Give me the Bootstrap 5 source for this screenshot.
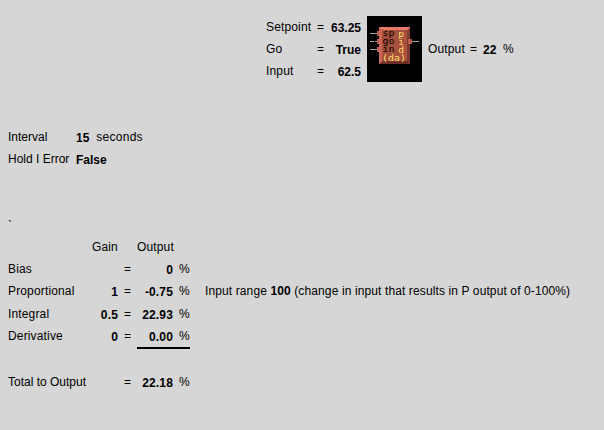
<!DOCTYPE html>
<html lang="en">
<head>
<meta charset="utf-8">
<meta name="viewport" content="width=device-width, initial-scale=1">
<title>PID controller</title>
<link href="https://cdn.jsdelivr.net/npm/bootstrap@5.3.0/dist/css/bootstrap.min.css" rel="stylesheet">
<style>
body{background:#d6d6d6;color:#000;font:12px/22px "Liberation Sans",Arial,sans-serif;width:604px;height:430px;overflow:hidden;letter-spacing:.15px}
b,strong{font-weight:700}
.pid-top{padding:16px 0 0 266px;height:126px}
.pid-inputs{display:grid;grid-template-columns:51px 14px 30px;width:101px;height:66px}
.pid-inputs b,.gains b{text-align:right}
.pid-inputs b,.settings b,.gains b,.pid-out b{padding-top:1px;height:22px}
.chip{width:55px;height:66px;display:block}
.pid-out{display:grid;grid-template-columns:42px 13px 20px auto;padding:22px 0 0 6px}
.settings{display:grid;grid-template-columns:68px auto;padding-left:8px;height:86px}
.settings b,.total,.snug{letter-spacing:0}
.sec{padding-left:7px;letter-spacing:.25px}
.tick{padding:3px 0 0 8px;height:24px}
.gains{display:grid;grid-template-columns:84px 26px 19px 36px 17px auto;grid-template-rows:22px 22px 23px 22px 22px 24px 22px;padding-left:8px;white-space:nowrap}
.gains>.eq,.gains>.pc{padding-left:6px}
.gains>.note{padding-left:15px;letter-spacing:.115px}
.rule{grid-column:4/6;height:2px;background:#000}
.total{grid-column:1/3}
.settings,.gains{align-content:start}
</style>
</head>
<body>
<header class="pid-top d-flex align-items-start">
  <div class="pid-inputs">
    <span>Setpoint</span><span>=</span><b class="snug">63.25</b>
    <span>Go</span><span>=</span><b class="snug">True</b>
    <span>Input</span><span>=</span><b class="snug">62.5</b>
  </div>
  <svg class="chip" viewBox="0 0 55 66" shape-rendering="crispEdges">
    <rect width="55" height="66" fill="#000"/>
    <path d="M3 17.5h7M3 25.5h4M8 25.5h2M3 33.5h7M45 25.5h7" stroke="#a8a8a8" fill="none"/>
    <path d="M10 15h3v5h-3zM10 23h3v5h-3zM10 31h3v5h-3z" fill="#b85c4c"/>
    <path d="M12 11h31v37H12z" fill="#a8503c"/>
    <path d="M12 11h31l-3 3H15z" fill="#e87868"/>
    <path d="M12 11l3 3v31l-3 3z" fill="#c86858"/>
    <path d="M43 11l-3 3v31l3 3z" fill="#803c30"/>
    <path d="M12 48l3-3h25l3 3z" fill="#703028"/>
    <path d="M41 23h4v5h-4z" fill="#b85c4c"/>
    <g font-family="DejaVu Sans Mono,monospace" font-size="8" letter-spacing="0">
      <g fill="#000"><text transform="translate(15.4 20) scale(1.25 1)">sp</text><text transform="translate(15.4 28) scale(1.25 1)">go</text><text transform="translate(15.4 36) scale(1.25 1)">in</text></g>
      <g fill="#ffdc70"><text transform="translate(31.200 21) scale(1.22 1)">p</text><text transform="translate(31.200 29) scale(1.22 1)">i</text><text transform="translate(31.200 36.500) scale(1.22 1)">d</text><text transform="translate(15 44.500) scale(1.25 1)">(da)</text></g>
    </g>
  </svg>
  <div class="pid-out"><span>Output</span><span>=</span><b>22</b><span>%</span></div>
</header>
<section class="settings">
  <span class="snug">Interval</span><div class="d-flex"><b>15</b><span class="sec">seconds</span></div>
  <span class="snug">Hold I Error</span><b>False</b>
</section>
<div class="tick">`</div>
<section class="gains">
  <span></span><span>Gain</span><span></span><span>Output</span><span></span><span></span>
  <span>Bias</span><b></b><span class="eq">=</span><b>0</b><span class="pc">%</span><span></span>
  <span>Proportional</span><b>1</b><span class="eq">=</span><b>-0.75</b><span class="pc">%</span><span class="note">Input range <strong>100</strong> (change in input that results in P output of 0-100%)</span>
  <span>Integral</span><b>0.5</b><span class="eq">=</span><b>22.93</b><span class="pc">%</span><span></span>
  <span>Derivative</span><b>0</b><span class="eq">=</span><b>0.00</b><span class="pc">%</span><span></span>
  <div class="rule"></div>
  <span class="total">Total to Output</span><span class="eq">=</span><b>22.18</b><span class="pc">%</span><span></span>
</section>
</body>
</html>
